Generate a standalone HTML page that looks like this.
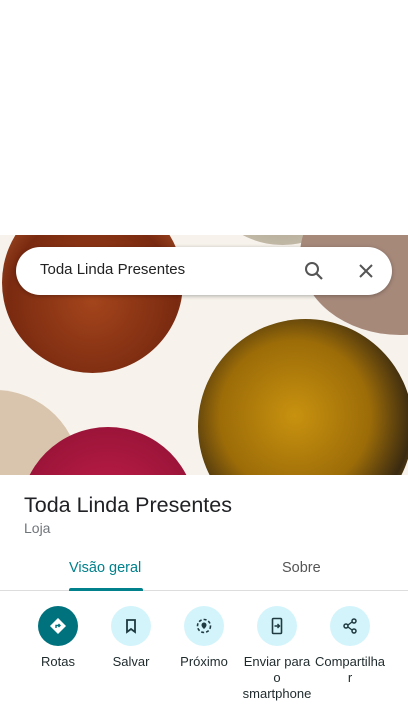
<!DOCTYPE html>
<html><head><meta charset="utf-8"><style>
*{margin:0;padding:0;box-sizing:border-box}
body{width:408px;height:710px;background:#fff;font-family:"Liberation Sans",sans-serif;position:relative;overflow:hidden}
.img{position:absolute;left:0;top:235px;width:408px;height:240px;overflow:hidden;background:#f7f3ec}
.c{position:absolute;border-radius:50%}
.search{position:absolute;left:16px;top:247px;width:376px;height:48px;background:#fff;border-radius:24px;box-shadow:0 1px 4px rgba(0,0,0,.3)}
.search span{position:absolute;left:24px;top:14px;font-size:15px;color:#222}
.title{position:absolute;left:24px;top:493px;font-size:21.5px;color:#202124}
.sub{position:absolute;left:24px;top:520px;font-size:14px;color:#70757a}
.tab{position:absolute;top:560px;font-size:14.5px}
.btn{position:absolute;top:606px;width:40px;height:40px;border-radius:50%;background:#d3f4fb;display:flex;align-items:center;justify-content:center}
.lbl{position:absolute;top:654px;width:90px;text-align:center;font-size:13px;line-height:16px;color:#1f2a2c}
</style></head><body>
<div class="img">
  <div class="c" style="left:200px;top:-150px;width:165px;height:160px;background:radial-gradient(#8a7a68,#d9d2c0)"></div>
  <div class="c" style="left:300px;top:-60px;width:200px;height:160px;background:#a7897a"></div>
  <div class="c" style="left:-90px;top:155px;width:170px;height:170px;background:#d9c5ad"></div>
  <div class="c" style="left:2px;top:-43px;width:181px;height:181px;background:radial-gradient(circle at 50% 60%,#a4451c,#7a2a10 60%,#c76a3a)"></div>
  <div class="c" style="left:198px;top:84px;width:215px;height:215px;background:radial-gradient(circle at 45% 45%,#c8920f,#9c6c08 45%,#3a2a10 70%,#d7a72a)"></div>
  <div class="c" style="left:20px;top:192px;width:176px;height:176px;background:radial-gradient(#c21e4a,#8c1032)"></div>
</div>
<div class="search"><span>Toda Linda Presentes</span>
<svg style="position:absolute;left:288px;top:14px" width="20" height="20" viewBox="0 0 20 20"><circle cx="8" cy="8" r="6" fill="none" stroke="#555" stroke-width="2"/><path d="M12.5 12.5L18 18" stroke="#555" stroke-width="2.2"/></svg>
<svg style="position:absolute;left:342px;top:16px" width="16" height="16" viewBox="0 0 16 16"><path d="M2 2L14 14M14 2L2 14" stroke="#555" stroke-width="2"/></svg>
</div>
<div class="title">Toda Linda Presentes</div>
<div class="sub">Loja</div>
<div class="tab" style="left:69px;color:#00818c">Visão geral</div>
<div class="tab" style="left:282px;color:#555">Sobre</div>
<div style="position:absolute;left:0;top:590px;width:408px;height:1px;background:#ddd"></div>
<div style="position:absolute;left:69px;top:588px;width:74px;height:3px;background:#00818c;border-radius:2px 2px 0 0"></div>

<div class="btn" style="left:38px;background:#00727d"><svg width="20" height="20" viewBox="0 0 20 20"><path d="M10 2L18 10L10 18L2 10Z" fill="#fff"/><path d="M8 12V9.5H12M10.5 8L12 9.5L10.5 11" stroke="#00727d" stroke-width="1.4" fill="none"/></svg></div>
<div class="btn" style="left:111px"><svg width="20" height="20" viewBox="0 0 20 20"><path d="M6 4H14V16L10 13L6 16Z" fill="none" stroke="#1f3a40" stroke-width="1.8"/></svg></div>
<div class="btn" style="left:184px"><svg width="20" height="20" viewBox="0 0 20 20"><circle cx="10" cy="10" r="6.5" fill="none" stroke="#1f3a40" stroke-width="1.6" stroke-dasharray="3 2"/><path d="M10 6.5a2.5 2.5 0 0 1 2.5 2.5c0 2-2.5 4-2.5 4s-2.5-2-2.5-4A2.5 2.5 0 0 1 10 6.5z" fill="#1f3a40"/></svg></div>
<div class="btn" style="left:257px"><svg width="20" height="20" viewBox="0 0 20 20"><rect x="5.5" y="2.5" width="9" height="15" rx="1" fill="none" stroke="#1f3a40" stroke-width="1.6"/><path d="M7.5 10H12M10.5 8L12.5 10L10.5 12" stroke="#1f3a40" stroke-width="1.4" fill="none"/></svg></div>
<div class="btn" style="left:330px"><svg width="20" height="20" viewBox="0 0 20 20"><circle cx="14" cy="5" r="2" fill="none" stroke="#1f3a40" stroke-width="1.5"/><circle cx="6" cy="10" r="2" fill="none" stroke="#1f3a40" stroke-width="1.5"/><circle cx="14" cy="15" r="2" fill="none" stroke="#1f3a40" stroke-width="1.5"/><path d="M8 9L12 6M8 11L12 14" stroke="#1f3a40" stroke-width="1.4"/></svg></div>
<div class="lbl" style="left:13px">Rotas</div>
<div class="lbl" style="left:86px">Salvar</div>
<div class="lbl" style="left:159px">Próximo</div>
<div class="lbl" style="left:232px">Enviar para<br>o<br>smartphone</div>
<div class="lbl" style="left:305px">Compartilha<br>r</div>
</body></html>
